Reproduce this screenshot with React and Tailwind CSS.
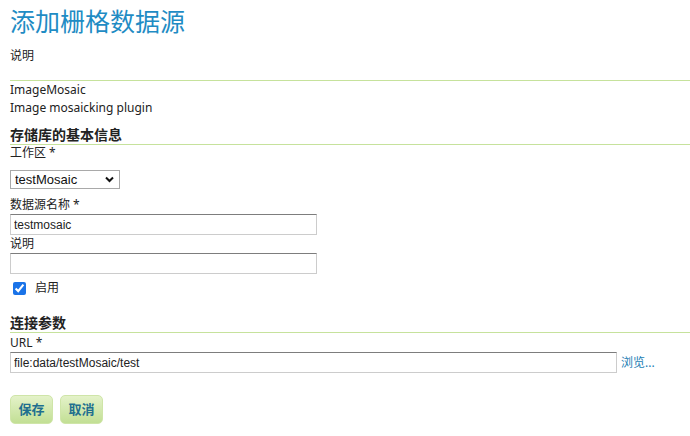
import React from "react";

const cjk = "font-['Noto_Sans','Noto_Sans_CJK_SC',sans-serif]";
const arial = "font-['Liberation_Sans','Noto_Sans_CJK_SC',sans-serif]";

function Label({ children, className = "" }) {
  return (
    <div className={`text-[12px] leading-[16px] text-[#222] ${className}`}>{children}</div>
  );
}

function TextInput({ value, className = "" }) {
  return (
    <input
      type="text"
      defaultValue={value}
      className={`${arial} block h-[21px] px-[3px] text-[12px] text-[#222] bg-white border border-[#cccccc] border-t-[#7d7d7d] outline-none ${className}`}
    />
  );
}

function Section({ title, className = "" }) {
  return (
    <div
      className={`text-[14px] leading-[18px] font-bold text-[#222] border-b border-[#c6e29c] ${className}`}
    >
      {title}
    </div>
  );
}

export default function App() {
  return (
    <div className={`${cjk} bg-white min-h-[436px] pl-[10px] pt-[6px]`}>
      <h1 className="text-[25px] leading-[30px] text-[#1f8cc4] font-normal">添加栅格数据源</h1>
      <Label className="mt-[12px]">说明</Label>
      <div className="mt-[16px] border-t border-[#c6e29c]" />
      <div className="text-[12px] leading-[18px] text-[#222]">ImageMosaic</div>
      <div className="text-[12px] leading-[18px] text-[#222]">Image mosaicking plugin</div>

      <Section title="存储库的基本信息" className="mt-[9px]" />
      <Label>工作区 *</Label>
      <div className="relative mt-[9px] w-[110px] h-[19px]">
        <select
          defaultValue="testMosaic"
          className={`${arial} block appearance-none w-full h-full pl-[4px] text-[13px] leading-[17px] text-[#111] bg-white border border-[#a9a9a9] rounded-none outline-none`}
        >
          <option>testMosaic</option>
        </select>
        <svg
          className="absolute right-[6px] top-[6px] pointer-events-none"
          width="9"
          height="7"
          viewBox="0 0 9 7"
        >
          <path d="M1 1.5 L4.5 5 L8 1.5" fill="none" stroke="#111" strokeWidth="2" />
        </svg>
      </div>

      <Label className="mt-[8px]">数据源名称 *</Label>
      <TextInput value="testmosaic" className="mt-[1px] w-[307px]" />
      <Label className="mt-[1px]">说明</Label>
      <TextInput value="" className="mt-[1px] w-[307px]" />

      <label className="mt-[7px] flex items-center h-[14px] gap-[9px] pl-[3px]">
        <input type="checkbox" defaultChecked className="w-[13px] h-[13px] accent-[#1a73e8]" />
        <span className="text-[12px] text-[#222]">启用</span>
      </label>

      <Section title="连接参数" className="mt-[19px]" />
      <Label className="mt-[2px]">URL *</Label>
      <div className="mt-[1px] flex items-center gap-[4px]">
        <TextInput value="file:data/testMosaic/test" className="w-[607px] h-[20px]" />
        <a className="text-[12px] text-[#1b7db3] cursor-pointer">浏览...</a>
      </div>

      <div className="mt-[22px] flex gap-[7px]">
        <button className="h-[29px] w-[43px] rounded-[5px] border border-[#cfe5a8] bg-gradient-to-b from-[#e4f2c9] to-[#c2df94] text-[13px] font-bold text-[#1f6f8f]">
          保存
        </button>
        <button className="h-[29px] w-[43px] rounded-[5px] border border-[#cfe5a8] bg-gradient-to-b from-[#e4f2c9] to-[#c2df94] text-[13px] font-bold text-[#1f6f8f]">
          取消
        </button>
      </div>
    </div>
  );
}
